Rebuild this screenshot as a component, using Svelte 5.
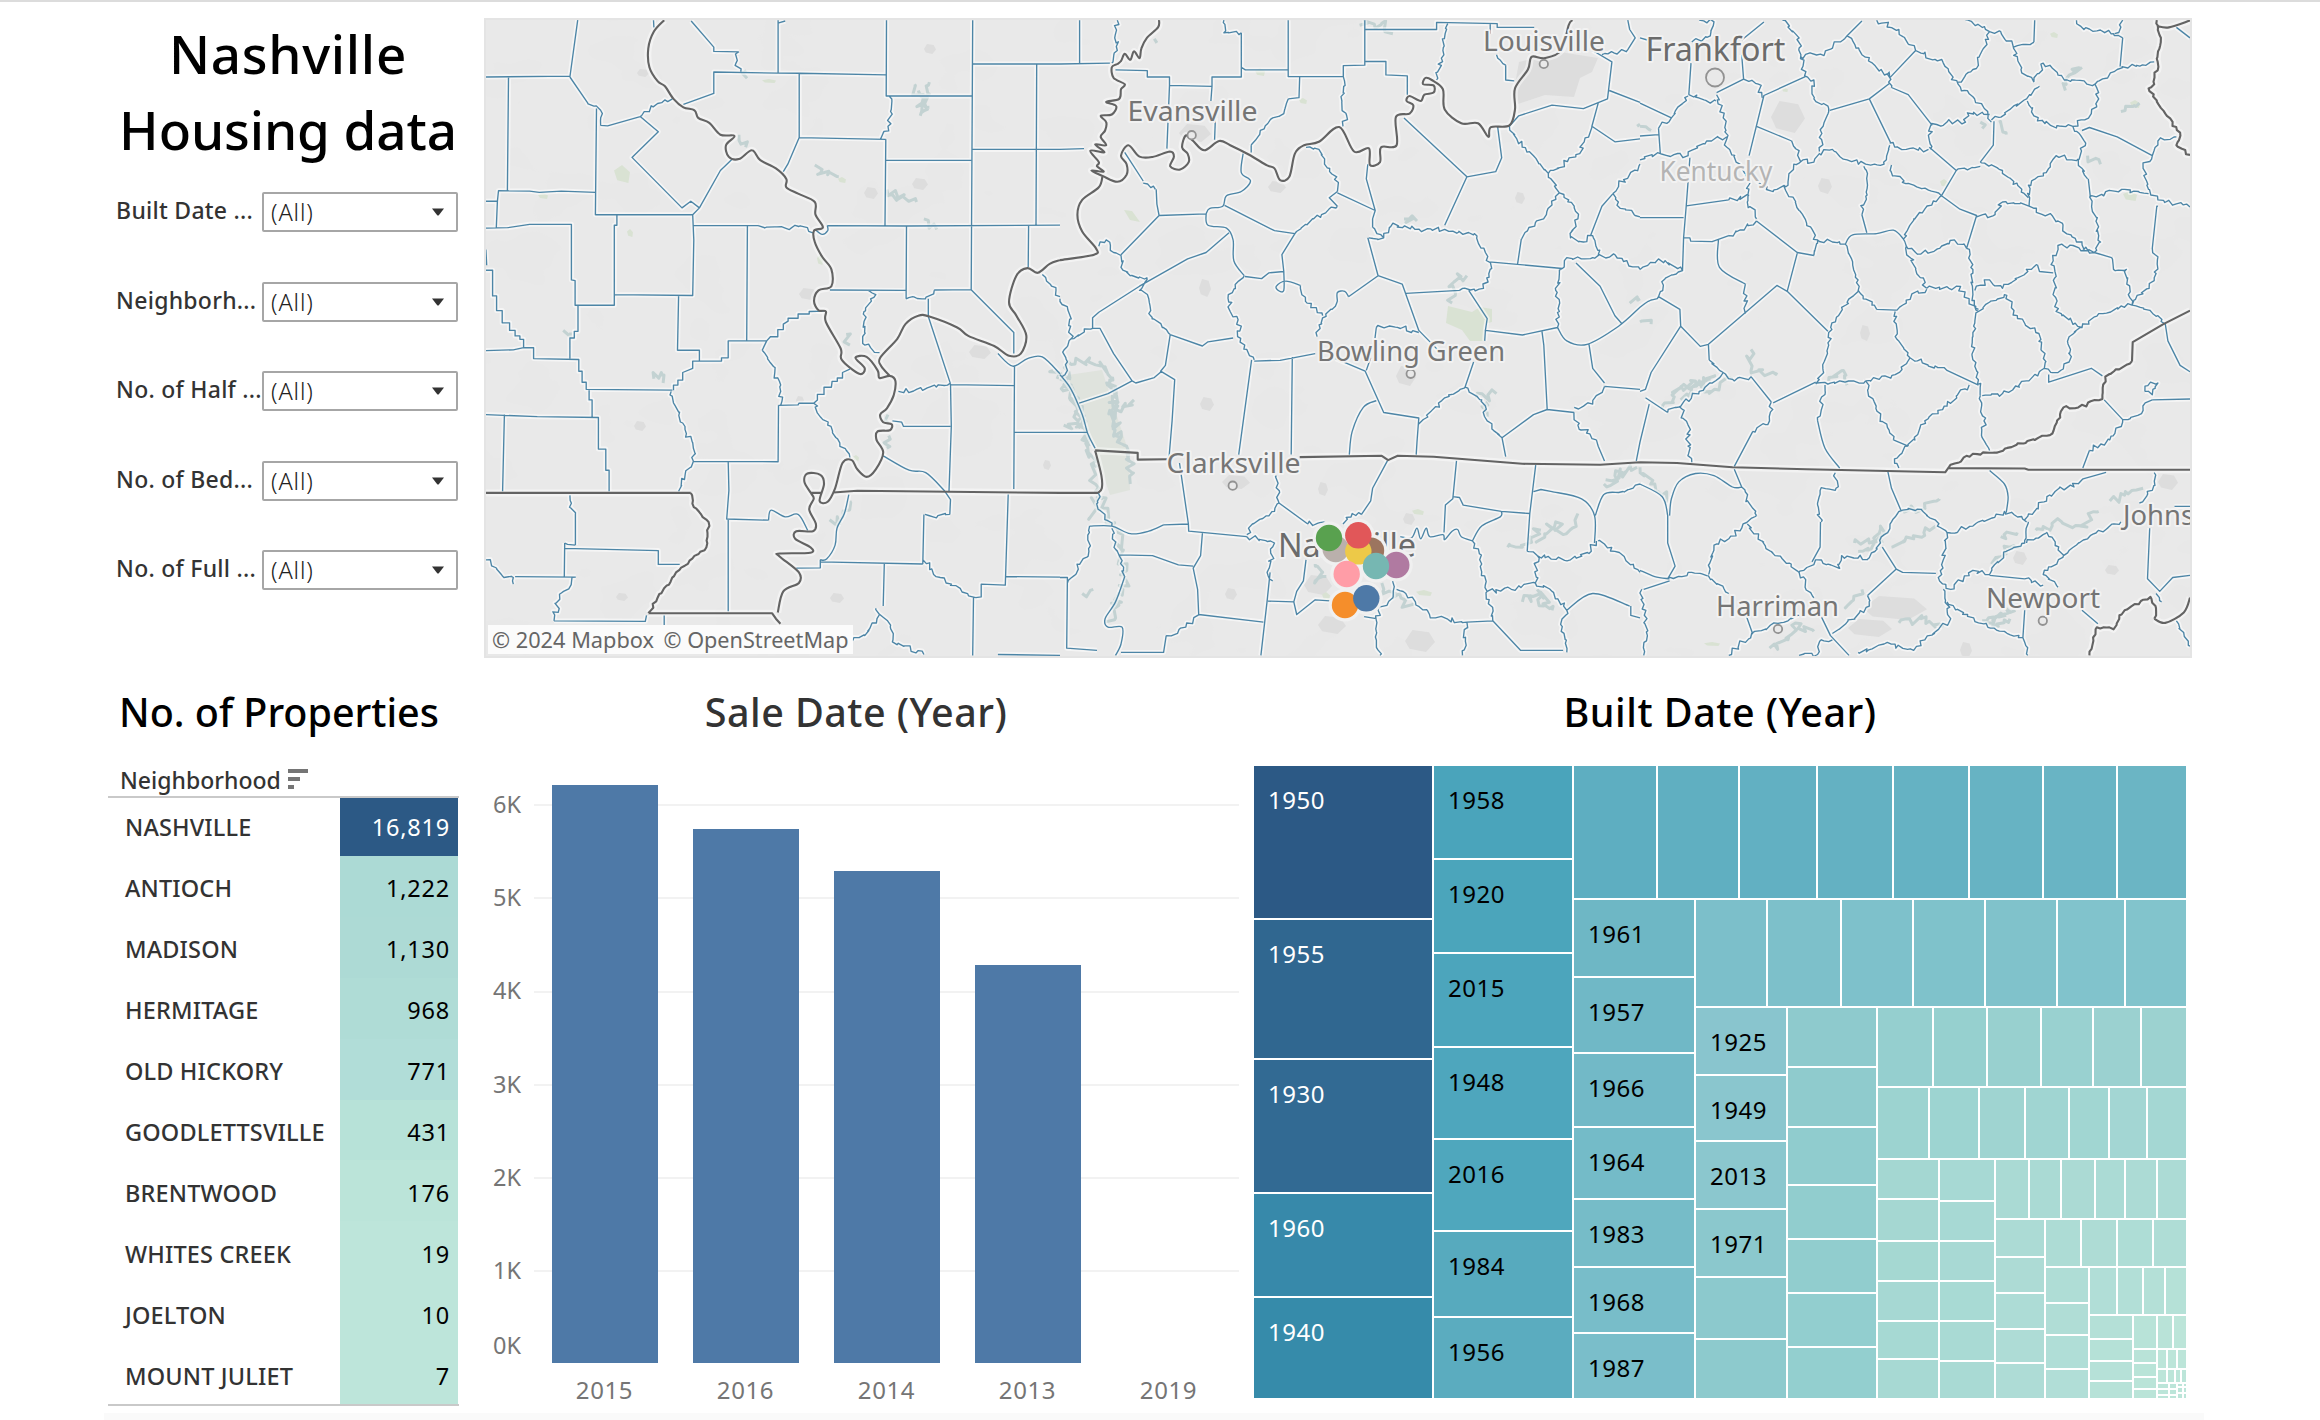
<script>
  const filters = ['Built Date ...', 'Neighborh...', 'No. of Half ...', 'No. of Bed...', 'No. of Full ...'];

  const rows = [
    { name: 'NASHVILLE', value: '16,819', fill: '#2c5985', light: true },
    { name: 'ANTIOCH', value: '1,222', fill: '#acdad5' },
    { name: 'MADISON', value: '1,130', fill: '#addad5' },
    { name: 'HERMITAGE', value: '968', fill: '#afdcd6' },
    { name: 'OLD HICKORY', value: '771', fill: '#b1ddd8' },
    { name: 'GOODLETTSVILLE', value: '431', fill: '#b7e2d8' },
    { name: 'BRENTWOOD', value: '176', fill: '#bbe4d9' },
    { name: 'WHITES CREEK', value: '19', fill: '#bde5da' },
    { name: 'JOELTON', value: '10', fill: '#bde5da' },
    { name: 'MOUNT JULIET', value: '7', fill: '#bde5da' }
  ];

  const ticks = ['6K', '5K', '4K', '3K', '2K', '1K', '0K'];
  const bars = [
    { year: '2015', height: 578 },
    { year: '2016', height: 534 },
    { year: '2014', height: 492 },
    { year: '2013', height: 398 },
    { year: '2019', height: 0 }
  ];

  // ---- treemap -----------------------------------------------------------
  function mix(a, b, t) {
    const pa = [1, 3, 5].map((i) => parseInt(a.slice(i, i + 2), 16));
    const pb = [1, 3, 5].map((i) => parseInt(b.slice(i, i + 2), 16));
    return `rgb(${pa.map((v, i) => Math.round(v + (pb[i] - v) * t)).join(',')})`;
  }
  // A strip of leaves, laid along one direction
  function strip(dir, size, sizes, from, to, labels = [], light = false) {
    return {
      dir,
      size,
      items: sizes.map((s, i) => ({
        size: s,
        fill: mix(from, to, sizes.length > 1 ? i / (sizes.length - 1) : 0),
        label: labels[i],
        light
      }))
    };
  }
  const group = (dir, size, items) => ({ dir, size, items });
  const leaf = (size, fill, label, light) => ({ size, fill, label, light });
  const pale = '#bce5d9';

  const tree = group('row', 932, [
    group('column', 178, [
      leaf(152, '#2c5985', '1950', true),
      leaf(138, '#306790', '1955', true),
      leaf(132, '#326a93', '1930', true),
      leaf(102, '#3789aa', '1960', true),
      leaf(100, '#368baa', '1940', true)
    ]),
    group('column', 138, [
      leaf(92, '#4aa4bb', '1958'),
      leaf(92, '#4ba5bb', '1920'),
      leaf(92, '#4ca5bc', '2015'),
      leaf(90, '#4ea6bd', '1948'),
      leaf(90, '#4fa7bd', '2016'),
      leaf(84, '#57aabe', '1984'),
      leaf(80, '#5bacbf', '1956')
    ]),
    group('column', 612, [
      strip('row', 132, [82, 80, 76, 74, 74, 72, 72, 68], '#5eaec1', '#6bb5c4'),
      group('row', 498, [
        strip('column', 120, [76, 74, 72, 70, 66, 64, 64], '#6eb7c5', '#7abeca',
          ['1961', '1957', '1966', '1964', '1983', '1968', '1987']),
        group('column', 490, [
          strip('row', 106, [70, 72, 70, 70, 70, 66, 60], '#7cbfca', '#82c4cc'),
          group('row', 390, [
            strip('column', 90, [66, 64, 66, 66, 60, 58], '#89c5ce', '#8dcacd',
              ['1925', '1949', '2013', '1971']),
            strip('column', 88, [58, 58, 56, 52, 52, 52, 50], '#8ecacd', '#93cfcf'),
            group('column', 308, [
              strip('row', 78, [54, 52, 52, 50, 46, 44], '#95cfcf', '#9cd2d0'),
              strip('row', 70, [50, 48, 44, 42, 38, 36, 38], '#9cd3d0', '#a4d7d3'),
              group('row', 238, [
                strip('column', 60, [38, 40, 38, 38, 36, 38], '#a4d7d2', '#a7d9d3'),
                strip('column', 54, [40, 38, 38, 38, 38, 36], '#a7d9d4', '#a9dad4'),
                group('column', 190, [
                  strip('row', 58, [32, 30, 32, 28, 30, 28], '#aadad4', '#acdbd5'),
                  group('row', 178, [
                    strip('column', 48, [36, 34, 34, 32, 34], '#acdbd5', '#aedcd6'),
                    group('column', 140, [
                      strip('row', 46, [34, 34, 34, 32], '#addcd5', '#afddd6'),
                      group('row', 130, [
                        strip('column', 42, [34, 30, 32, 28], '#afddd6', '#b1ded7'),
                        group('column', 96, [
                          strip('row', 46, [26, 24, 20, 20], '#b1ded7', '#b5e1d7'),
                          group('row', 82, [
                            strip('column', 42, [22, 20, 18, 16], '#b4e0d7', '#b7e2d8'),
                            strip('column', 22, [32, 12, 12, 10, 8], '#b8e3d8', '#bae4d8'),
                            group('column', 28, [
                              strip('row', 32, [14, 12], '#b9e3d8', pale),
                              strip('row', 18, [8, 8, 8], pale, pale),
                              strip('row', 12, [8, 6, 4, 4], pale, pale),
                              group('row', 14, [
                                strip('column', 10, [4, 4, 2], pale, pale),
                                strip('column', 6, [4, 4, 2], pale, pale),
                                strip('column', 4, [2, 4, 4], pale, pale),
                                strip('column', 2, [2, 4, 4], pale, pale)
                              ])
                            ])
                          ])
                        ])
                      ])
                    ])
                  ])
                ])
              ])
            ])
          ])
        ])
      ])
    ])
  ]);

  // ---- map ---------------------------------------------------------------
  // Each map sheet lists its lines, one per row: s = straight, w = river-like, c = curved
  const KX = 1 / 2.7034;
  const KY = 1 / 2.3758;
  let seed = 11;
  const rand = () => ((seed = (seed * 16807) % 2147483647) / 2147483647) - 0.5;

  function toPath(line, ox, amp = 5) {
    const kind = line[0];
    const pts = line.slice(2).trim().split(/\s+/).map((p) => {
      const [x, y] = p.split(',').map(Number);
      return [ox + x * KX, y * KY];
    });
    const f = (p) => `${p[0].toFixed(1)} ${p[1].toFixed(1)}`;
    if (kind === 's') return 'M' + pts.map(f).join('L');
    if (kind === 'c') {
      let d = 'M' + f(pts[0]);
      for (let i = 0; i < pts.length - 1; i++) {
        const a = pts[i - 1] || pts[i], b = pts[i], c = pts[i + 1], e = pts[i + 2] || c;
        d += `C${f([b[0] + (c[0] - a[0]) / 6, b[1] + (c[1] - a[1]) / 6])} ${f([c[0] - (e[0] - b[0]) / 6, c[1] - (e[1] - b[1]) / 6])} ${f(c)}`;
      }
      return d;
    }
    const out = [pts[0]];
    for (let i = 1; i < pts.length; i++) {
      const a = pts[i - 1], b = pts[i];
      const n = Math.max(1, Math.round(Math.hypot(b[0] - a[0], b[1] - a[1]) / 3.5));
      for (let k = 1; k < n; k++) {
        out.push([a[0] + ((b[0] - a[0]) * k) / n + rand() * amp, a[1] + ((b[1] - a[1]) * k) / n + rand() * amp]);
      }
      out.push(b);
    }
    return 'M' + out.map(f).join('L');
  }
  const build = (sheet, ox, amp) => sheet.trim().split('\n').map((l) => toPath(l.trim(), ox, amp)).join('');

  const countyWest = `
s 264,48 243,183
s 16,183 243,181
s 77,183 74,453
s 243,183 290,243
w 290,243 308,252 326,262 326,298
s 315,258 312,510 575,510 593,494 650,405 682,378
s 326,298 345,299 433,277 482,313 411,374 546,494 570,478 593,494
w 433,277 480,246 520,235
s 550,248 632,222 632,171 806,174 863,174 1098,178
s 571,50 632,112 632,122 700,123
w 700,123 692,150 705,170
s 806,48 806,172
w 806,55 825,50
s 469,48 470,65
s 1099,48 1098,228 1330,228
s 1332,48 1328,688
s 863,174 863,327 1097,331
s 863,327 832,390 820,408
w 1106,228 1110,265 1103,300 1083,330
s 1097,331 1095,535
s 1098,381 1328,381
s 1332,152 1568,152
s 1505,152 1503,535
s 1329,355 1568,355
s 16,478 47,478 50,453 134,454 160,457 220,454 312,457
s 47,478 44,541
s 16,542 75,541 134,533 247,533 247,665 257,667 257,725 363,725 363,700 575,702 578,570 575,510
s 370,510 370,535 363,535 363,700
s 575,536 752,536
w 752,536 820,540 862,538 900,553
c 905,545 925,557 940,548 939,536
s 939,536 1153,537 1568,535
s 723,536 721,810
s 1153,537 1152,710
s 946,689 1152,690
s 1228,689 1327,688 1443,790 1443,840
w 1152,710 1170,705 1195,710 1228,690
s 1212,710 1212,752 1272,912
s 1483,535 1482,635
s 16,593 18,630
s 16,642 34,642 34,703 45,703 45,738 60,738 60,767 80,767 80,785 95,785 95,798 108,798 108,806 118,806 118,826
s 16,833 90,831 118,826 145,826 145,852 267,854 267,882 276,882 276,908 287,908 287,925 520,927
s 265,725 265,787 255,787 255,803 243,803 243,852
s 537,702 534,832 593,832 593,858
s 523,927 523,915 535,915 535,903 548,903 548,885 575,875 575,858 653,858 653,850 671,850 671,810 775,810
s 775,810 785,800 805,800 805,783 820,783 820,770 833,763 833,756 860,756 860,746 890,746 890,740 930,739
s 775,810 763,832
w 763,832 797,885 813,930 813,963
s 807,963 860,962 862,958 902,958 912,950 912,937 930,937 930,920 950,920 952,906 966,906 966,898 980,898 980,885 1000,877
w 902,958 940,1010 1000,1087
s 807,963 806,1097 577,1096
w 517,930 525,960 548,1005 577,1065 577,1096 555,1125 537,1167
s 671,1097 673,1165 667,1233 780,1236
c 780,1236 787,1212 825,1228 860,1222 886,1260
s 671,1233 671,1452
s 16,985 155,990 320,992 320,1067 340,1067 340,1117 349,1117 349,1167
s 295,925 295,950 303,950 303,990
s 66,985 61,1167
w 243,1177 242,1205 258,1222
s 258,1220 258,1295
w 258,1295 229,1290
s 229,1290 228,1370
s 229,1303 482,1308 482,1341 540,1341
w 16,1330 45,1350 60,1368 90,1372 90,1388
s 95,1370 259,1371
w 259,1371 215,1412 200,1475
s 200,1475 447,1476 450,1462
s 498,1462 498,1485
w 1050,690 1070,700 1038,740 1040,820 1080,838
w 1131,930 1180,925 1272,910
s 1272,912 1274,1013 1268,1167
s 1272,914 1445,916
c 1400,840 1440,870 1480,852 1520,848 1568,888
s 1445,870 1443,1162
s 1445,1027 1568,1027
s 1115,1000 1140,1003 1145,1013 1272,1013
c 1090,1083 1160,1117 1205,1123 1255,1165
s 1255,1165 1272,1187 1270,1222
w 1270,1222 1225,1228 1203,1222
s 1200,1222 1197,1340
c 997,1175 985,1220 965,1255 960,1295 937,1328 920,1330
s 920,1330 920,1349 855,1350
s 920,1335 1197,1340
w 1197,1330 1260,1385 1340,1420
s 1340,1420 1355,1418 1355,1388 1420,1390 1428,1175
s 1422,1370 1568,1371
s 1334,1420 1332,1557
s 1093,1340 1090,1440
w 1070,1445 1080,1460 1102,1475 1115,1525 1200,1555
w 1080,1460 1040,1510 1008,1522
w 1520,652 1545,680 1568,705
s 1400,1555 1568,1557`;

  const stateWest = `
c 498,48 470,75 455,115 458,160 480,193 500,205 523,235 550,255 580,262 590,280 620,292 650,320 688,323 665,345 672,372 700,378 735,357 757,380 800,400 828,425 828,445 860,460 905,480 907,510 927,540 903,548 905,575 925,610 950,640 950,680 915,690 903,715 915,737 935,740 935,765 975,828 978,855 1025,888 1040,875 1015,850 1045,848 1075,880 1080,898 1108,893 1123,905 1118,940 1100,970 1082,985 1090,1003 1113,1008 1108,1022 1075,1025 1072,1045 1090,1075 1070,1115 1045,1133 1020,1115 1005,1093 980,1100 960,1160 940,1192 918,1190 930,1150 920,1128 885,1125 877,1145 895,1172 902,1185 890,1210 908,1245 900,1262 855,1262 852,1280 893,1300 893,1313 810,1315 810,1322 862,1360 862,1385 820,1405 805,1455
s 455,1457 790,1457 800,1470 812,1482
s 16,1171 570,1171
w 570,1171 578,1205 618,1240 612,1300 530,1360 480,1420 455,1457
s 893,1171 925,1171
s 955,1170 1020,1166 1568,1171
c 1108,893 1085,870 1082,850 1128,805 1150,770 1185,750 1215,752 1290,778 1320,798 1390,822 1430,845 1462,840 1477,797 1450,750 1430,718 1450,655 1480,637 1508,648 1540,627 1568,618`;

  const countyMid = `
s 53,48 53,152
s 0,152 135,150
w 155,48 148,90 155,120 140,150
s 150,166 236,168 236,183 296,183 296,203 411,205 411,183 490,183 490,78
w 443,48 443,78 490,78
s 296,203 289,353
s 411,205 408,240
s 420,280 418,332
s 490,160 501,166 617,166
s 617,48 617,182 766,182 766,156 824,155 824,48
s 824,146 881,146 881,178 939,180 939,225
s 824,70 1018,70 1018,53 1182,56 1182,65 1282,65
w 766,182 762,240 775,275 765,300
s 648,182 646,232 617,235
w 617,235 605,270 575,280 540,320 517,345
s 517,345 517,362
s 0,355 65,353
w 1048,56 1035,120 1018,190
s 175,362 225,430
w 225,435 258,450
s 260,450 262,485 268,512 395,508
c 395,508 405,495 440,490 450,465 490,455 515,430 490,410 495,365
s 268,512 165,605
w 105,585 125,570 145,600 165,607 165,635 190,655 235,660 215,690 240,710 240,745 298,795
c 395,508 400,535 450,542 468,570 470,620 498,655
s 445,488 580,548 635,555 600,605 605,645 565,648 545,662 500,657
c 605,645 605,690 590,690 585,680 610,668 650,678
w 650,678 668,720 710,750
s 457,553 395,600 345,615 215,680 105,742 88,755 88,780
w 498,655 455,700 460,740 490,775 480,800 525,855
s 298,795 385,822 400,812 468,803
s 298,795 285,868 272,882 310,902 303,1000 295,1085
w 0,710 25,745 30,805 88,780
s 88,780 108,780 145,840 195,905 205,910 255,897 275,882
w 30,805 12,830 20,880 5,895
s 195,905 130,935 52,958
c 0,890 30,925 60,985 75,1030 95,1065
s 0,1027 72,1027
s 518,855 483,1080
s 525,858 595,856 690,840
s 745,852 825,882 875,980 970,993 965,1050 963,1080
s 628,848 625,1080
c 855,952 820,968 790,1025 782,1080
w 635,555 685,520 750,490
s 750,490 728,470 750,455
w 750,455 748,420 715,390 700,355 665,350
s 750,458 852,500 828,425 832,390
s 852,500 845,520 845,540
w 845,540 875,565 835,565
w 875,565 900,530 960,545 1040,545 1120,555 1150,600 1163,640 1145,685 1080,690
s 1080,690 935,697
s 832,565 860,655 780,705
c 780,705 770,692 750,695 750,715
w 750,715 735,735 710,755 695,800
s 860,655 925,675 970,785 1020,830
w 970,790 950,790 935,775 855,778
s 855,778 850,815
s 840,850 828,880
s 930,280 1100,420 1040,535
s 1100,420 1178,408 1194,375 1183,300
w 1215,300 1235,330 1280,370 1320,412 1350,458 1390,490 1400,520 1380,565 1415,575 1440,560 1455,605
s 1215,300 1240,275 1330,250 1415,258 1480,235 1492,147 1440,120
s 1163,56 1163,80
w 1180,130 1205,155
s 1205,155 1205,190 1228,192
s 1485,215 1568,243
s 1455,245 1438,300 1500,337 1568,330
w 1438,300 1405,365 1320,412
s 1535,48 1540,70 1555,90 1535,118
w 1535,118 1465,130
w 1350,458 1315,510 1247,568
s 1247,568 1237,627
s 1160,622 1358,638
w 1358,638 1370,612 1440,612 1500,605 1568,640
w 1358,638 1340,690 1350,740 1345,778
c 1345,778 1370,810 1425,818 1510,775 1568,730
s 1395,625 1460,680 1500,750 1518,768
w 1568,390 1510,440 1495,460
s 1495,460 1465,490 1435,558
w 1495,460 1515,495 1568,515
s 1105,690 1155,757 1150,785 1250,796 1345,778
s 1150,785 1148,810
s 1118,860 1095,920
w 1095,920 1040,945 970,1008
w 1095,920 1140,950 1155,1000 1195,1040
s 1195,1040 1205,1085
s 1195,1040 1280,985 1317,973 1390,980
w 1390,980 1400,1010 1450,1045
s 1450,1045 1455,1060 1472,1095
s 1303,788 1308,820 1317,973
s 1430,818 1440,875 1472,910
w 1472,918 1440,960 1390,968
s 1472,918 1568,925
s 1568,1050 1558,1095
s 323,1100 347,1245 280,1247
c 280,1247 240,1262 190,1268 140,1250 80,1250
s 347,1245 348,1262 505,1275
w 505,1275 580,1290 560,1360 575,1380
s 568,1360 560,1428 543,1557
w 505,1270 520,1245 580,1215 592,1195 585,1130
s 592,1195 670,1245
w 670,1245 715,1240
s 885,1095 845,1160 840,1190 815,1222
w 815,1222 790,1220 765,1245
s 1072,1095 1062,1185 1042,1200 1038,1265
s 1062,1180 1080,1182 1090,1200 1193,1215 1270,1220
c 1193,1215 1190,1228 1140,1250 1115,1285
s 1286,1105 1270,1220 1263,1310
c 920,1275 950,1278 965,1255 975,1280 990,1255 1000,1275 1035,1270 1040,1282 1060,1262 1075,1258 1085,1275 1115,1285
w 1115,1285 1140,1340 1155,1405 1170,1475
w 1155,1405 1220,1400 1285,1385 1290,1320 1263,1310
w 1290,1320 1380,1330 1430,1315 1450,1285
s 1280,1168 1300,1163 1330,1168
c 1330,1168 1410,1185 1445,1225 1445,1290
w 1568,1150 1510,1170
c 1510,1170 1470,1175 1447,1225
w 1455,1285 1500,1310 1568,1360
w 1285,1385 1330,1405 1370,1450 1355,1500 1370,1550
c 1370,1450 1440,1410 1540,1440
s 1543,1440 1543,1462 1568,1468
w 910,1400 1015,1468 1100,1478
s 1100,1478 1170,1475 1245,1545 1360,1545
w 1100,1478 1088,1557
w 900,1380 900,1420 860,1450 855,1500 865,1557
s 822,1465 855,1470
s 665,1330 658,1380 640,1405 632,1430 562,1428
s 632,1430 640,1460 690,1425 740,1428
s 385,1267 380,1320 360,1350 372,1400 375,1460 550,1478
w 375,1460 340,1490 287,1510
s 287,1510 280,1550 165,1550
w 140,1255 160,1320 175,1370
c 175,1370 150,1430 122,1470 130,1490 168,1490 165,1530 150,1557
s 160,1318 250,1320 320,1342 360,1345
w 103,1170 103,1210 140,1250
w 80,1250 78,1310 20,1385
s 0,1372 20,1372 18,1540 100,1545`;

  const stateMid = `
c 268,48 265,65 235,90 220,115 215,138 200,122 190,142 175,128 165,145 155,152 140,160 145,185 175,200 165,212 160,235 125,242 152,252 140,272 110,275 125,290 122,310 110,325 125,345 95,343 120,362 82,358 105,385 100,395 118,408 85,405 115,418 155,432 180,415 180,390 165,370 185,345 215,372 250,373 297,360 308,372 298,395 325,403 348,385 345,365 330,350 340,322 360,335 390,357 430,335 460,345 510,367 560,393 580,400 595,428 620,420 635,365 660,345 700,337 755,302 795,360 835,352 838,392 865,385 868,350 910,345 908,278 945,270 955,250 937,240 945,228 975,240 985,225 1010,220 1010,203 982,200 988,185 1005,190 1035,212 1040,260 1085,293 1130,293 1158,325 1165,302 1215,298 1230,260 1230,210 1265,165 1275,135 1310,138 1355,120 1375,60 1385,48
c 115,418 105,445 60,475 47,510 60,550 97,590 92,605 0,618
s 95,1070 210,1076 210,1092 290,1091
c 95,1070 112,1130 113,1160 103,1171
s 103,1171 0,1171
s 648,1086 870,1083 887,1093 913,1083 1010,1085 1250,1102 1460,1104 1568,1098`;

  const countyEast = `
w 160,48 200,52 190,85 140,100
s 0,90 20,95
s 138,150 132,225
w 132,225 190,245 205,240
s 207,220 280,188 275,130
s 275,95 335,52
w 385,48 430,90 435,130 445,180 470,190 470,235 510,258 495,300 485,360
w 435,135 500,125 560,85
s 560,85 600,50
w 560,85 600,130 675,185
s 675,185 745,120
w 640,48 700,70 745,120 820,150 860,200 900,230 940,265 950,290
w 675,170 672,195 680,208
s 680,208 725,225 790,298
s 447,182 335,227 295,370
w 280,188 320,200 330,232
w 207,225 225,280 235,350 270,390 295,430 290,480 315,520
s 315,300 410,335
w 410,335 435,385
w 315,430 360,455 400,440 415,400 440,380 470,385 485,365
w 485,365 520,355 560,380 610,390 660,390 675,345
s 513,262 620,235 678,340
w 675,340 720,355 780,355
s 675,198 620,235
w 785,300 785,355
w 785,300 830,290 880,290 885,268 945,272
s 782,350 855,405 815,465
w 855,405 920,395
s 920,385 955,345 957,288
w 950,285 1000,260 1045,235 1080,205
w 860,195 900,165 925,120 945,75
w 880,48 945,75 975,75 1010,115 1030,165 1065,195
w 1010,112 1065,100
s 1065,100 1067,48
w 1065,195 1090,150 1155,190 1230,200 1290,165 1390,147
w 1180,48 1200,70 1280,80 1305,90
s 1305,90 1298,158
w 1305,48 1283,80
w 1047,240 1065,275 1110,298 1170,300 1220,270 1240,235 1230,200
w 1170,300 1205,340 1185,380
s 1195,310 1215,303 1290,325 1385,370
w 1385,370 1400,335 1450,325
w 1385,370 1360,400 1375,450 1400,475 1487,492
w 1185,380 1210,425
s 1212,425 1217,465
w 1217,465 1240,560 1245,575 1228,600
w 1217,467 1310,450 1375,460
w 1185,378 1125,370 1105,400 1050,440 1052,490
w 920,385 980,405 1050,470
w 1052,490 980,480 960,510 910,515
s 815,465 865,497 910,512 883,590
w 1052,490 1130,525 1180,575 1228,600
s 1228,600 1275,612
w 1275,612 1280,640 1315,640 1320,700 1330,725
s 1400,490 1397,490 1385,590
w 1385,590 1400,610 1390,660 1330,725
w 1228,600 1140,580 1117,620
w 1117,620 1125,740 1195,778 1240,745 1330,725 1400,750 1420,770
s 1420,770 1427,810 1460,868 1487,883
w 1195,778 1160,800 1160,860 1130,885 1093,875 1095,840 1070,790 1020,750 985,700 915,740
w 905,690 945,665 980,685 1075,630
s 1075,630 1080,645 1117,648
w 883,590 900,640 900,700 915,740
w 915,740 900,790 905,870 920,940
w 775,685 835,685 855,680 915,735
w 720,585 745,640 775,685
w 720,585 745,600 795,597 850,570 883,590
w 712,568 740,520 815,465
w 815,465 740,440 683,418 680,392
c 555,580 575,558 640,555 685,547 712,568 720,585
w 555,580 575,630 590,690
w 590,690 640,735
s 640,735 692,737
w 692,737 720,720 735,698 775,687
w 605,395 615,440 600,510
s 600,510 613,553
w 480,570 520,575 555,580
w 390,440 430,500 480,570 470,607
s 470,607 425,600 315,525
s 425,602 398,692 508,787
s 398,692 370,678 185,818
w 590,690 545,730 510,790 510,820 495,880 475,912
s 475,908 360,957
w 315,525 240,560
s 240,560 195,574 137,573 135,565 118,565
s 135,375 125,490 118,565 115,643
s 0,517 118,517
s 125,489 240,475
w 240,475 295,465
c 212,570 215,635 285,675
w 285,675 285,745
w 0,640 50,615 115,643 70,660 50,705 0,730
s 50,705 108,735 110,775 163,823 185,818 187,855
w 187,855 215,880 255,905 300,895
s 300,895 355,955
s 110,775 30,885 15,925 0,930
w 75,980 160,930 225,885
s 15,945 75,980
w 355,955 350,1000 305,1025
s 305,1025 255,1108
w 105,965 130,1010 130,1060 140,1098
s 25,960 0,1050
w 475,912 540,905 610,905
w 610,905 640,975 685,1045
s 685,1045 725,1060
w 725,1060 770,1000 830,965 890,915
w 610,905 690,890 730,850
w 730,850 830,880
s 830,880 915,915
w 730,850 690,800 690,740
w 500,915 480,1000
c 480,1000 500,1065 540,1112
w 725,1060 688,1090 700,1112
w 925,940 980,935
w 980,935 1045,905 1093,875
w 920,940 930,1000 925,1040 945,1070
s 1105,890 1105,908 1220,875 1250,893
s 1255,950 1305,997
w 1305,997 1270,1045 1215,1070
s 1215,1070 1197,1112
w 1305,997 1360,975 1385,950
s 1385,950 1487,948
w 1365,930 1380,908 1400,910 1385,938 1365,930
s 0,245 85,280
w 130,228 85,280 50,305
s 50,305 55,365
w 55,365 130,370 180,335 235,325
w 0,380 55,365
s 0,323 50,320
s 255,1115 275,1157
w 275,1157 315,1225
c 275,1157 250,1157 200,1130 150,1125 105,1145 85,1185 80,1225
c 0,1150 60,1180 75,1225
s 75,1225 75,1290 95,1345 75,1375
w 315,1225 240,1280 200,1295 185,1365
w 75,1375 130,1360 185,1368 240,1410
w 290,1245 365,1320 430,1360
w 430,1360 480,1330 540,1350 545,1320 620,1325 650,1290 680,1240 710,1212
s 670,1120 680,1160 705,1212
w 528,1123 530,1160 487,1165 480,1200 490,1240
s 488,1240 487,1300 465,1335
w 710,1212 760,1210 830,1265 900,1250 985,1215 1045,1240
c 945,1118 985,1150 995,1180 990,1218
w 830,1265 820,1330 810,1380 840,1400
s 655,1300 693,1352 710,1360 800,1362
s 693,1352 615,1415
w 615,1415 620,1440 520,1505
w 430,1360 470,1420
s 490,1465 515,1510 565,1557
w 840,1400 900,1355 945,1365 990,1310 1040,1290 1050,1240
w 1040,1235 1100,1180 1200,1137
s 1200,1137 1260,1122
s 945,1367 1040,1375
w 1040,1375 1090,1390
w 1045,1290 1100,1265 1145,1320 1090,1365 1130,1395
s 1195,1450 1238,1482
w 1145,1320 1210,1280 1300,1240
w 1390,1123 1385,1165 1350,1195
s 1378,1255 1372,1375 1405,1405 1440,1372 1487,1367
s 1445,1203 1487,1203
w 830,1430 915,1480 985,1500 1035,1515 1048,1557
s 1035,1515 1040,1450
w 240,1557 310,1500 400,1475 430,1462
s 288,1465 305,1507
w 820,1400 840,1470 770,1520 740,1545 660,1530 590,1550
c 0,1355 40,1370 80,1375
s 80,1380 10,1400
w 5,1400 20,1510 10,1557
w 1395,1410 1410,1430
w 1450,1475 1487,1535
w 430,1557 480,1555 490,1520 520,1520
s 1450,65 1487,90`;

  const stateEast = `
s 0,1098 100,1100 250,1110 450,1115 825,1122 835,1110
w 835,1110 900,1078 960,1075
w 960,1075 1115,1030 1145,968 1185,968 1250,948 1258,895 1330,858
s 1330,858 1332,813 1415,770 1487,738
s 835,1112 1040,1113 1050,1116 1487,1116
w 1397,48 1408,100 1390,200 1375,210 1420,270 1460,315 1450,345 1487,368
c 1397,62 1430,65 1487,49
w 1215,1557 1235,1490 1280,1495 1310,1450 1380,1418 1395,1445 1390,1470
c 1390,1470 1420,1480 1470,1455 1487,1420`;

  const waterWest = `
w 1175,200 1195,245 1190,275
w 1185,215 1200,250 1190,270
w 1215,195 1200,240 1215,255
w 905,392 940,415 970,420
w 1100,450 1130,470 1180,480
w 1100,462 1140,468
w 700,320 718,350
w 990,795 1000,820
w 470,900 490,885 495,910
w 225,785 245,790
w 1103,985 1103,1005
w 1105,1035 1100,1065
w 945,1235 970,1240 1000,1190
w 1200,520 1235,545
w 1550,880 1560,900
w 720,168 722,186`;
  const waterMid = `
w 0,885 40,950 75,1050 105,1180 140,1250
w 0,900 45,965 80,1060
w 30,900 15,870 80,850 130,890 145,970 155,1050 180,1060 190,1150
w 135,900 150,975 158,1050
w 145,970 200,950
w 50,1000 10,1010
w 105,1180 80,1230
w 145,1250 175,1340 170,1400 125,1480
w 255,92 262,102
w 810,60 870,55 900,80
w 930,520 965,525
w 1060,720 1065,670 1100,655
w 1540,720 1568,710
w 1560,300 1568,295
w 1125,945 1180,935
w 1150,955 1155,990
w 1470,1150 1500,1130 1560,1110
w 1475,1140 1530,1120
w 1210,1300 1250,1300 1300,1260
w 1290,1290 1340,1240 1360,1270 1400,1220
w 870,1385 900,1420 950,1435
w 1250,1430 1300,1410 1330,1450
w 1290,1400 1310,1440
w 690,1340 710,1360 690,1380 720,1370
w 60,1410 90,1400`;
  const waterEast = `
w 60,970 110,920 160,905 190,930 250,900
w 110,950 140,920 200,890
w 90,940 150,905 190,900
w 300,830 300,880 370,885
w 510,905 550,880 560,915
w 0,1110 40,1150 75,1190
w 580,1290 620,1290 650,1250 655,1290
w 590,1310 640,1290
w 680,1300 740,1280 800,1250
w 700,1215 770,1205 810,1185
w 950,1340 1000,1300 1030,1300
w 975,1275 1020,1265
w 1070,1260 1140,1240 1190,1250 1240,1215
w 925,1475 980,1460 1015,1450
w 935,1480 990,1462
w 950,1485 1000,1470
w 350,1540 400,1520 420,1480 470,1500
w 1150,215 1150,190 1195,160
w 920,290 925,305
w 970,290 990,320
w 1300,265 1350,245
w 1210,370 1245,390
w 1270,1190 1330,1165 1360,1160
w 0,765 30,770
w 560,1440 600,1400
w 700,1480 760,1470 820,1490
w 0,300 30,310`;

  const counties = build(countyWest, 480) + build(countyMid, 1060) + build(countyEast, 1640);
  const states = build(stateWest, 480, 2.5) + build(stateMid, 1060, 2.5) + build(stateEast, 1640, 3);
  const water = build(waterWest, 480, 10) + build(waterMid, 1060, 11) + build(waterEast, 1640, 9);

  // Town areas and parks: centre and radii in map pixels
  const towns = [
    [643, 73, 6, 4], [930, 49, 6, 5], [871, 193, 7, 6], [920, 184, 8, 6], [808, 294, 9, 6], [640, 426, 6, 5],
    [980, 352, 11, 7], [800, 400, 4, 4], [622, 597, 6, 4], [837, 598, 7, 5], [1047, 465, 4, 5], [1195, 133, 16, 9],
    [1277, 187, 9, 6], [1205, 288, 6, 9], [1207, 404, 7, 7], [1520, 198, 5, 6], [1406, 376, 10, 10], [1323, 489, 5, 7],
    [1236, 482, 14, 7], [1231, 594, 6, 6], [1332, 625, 14, 9], [1318, 585, 14, 10], [1420, 641, 15, 11], [1409, 519, 6, 6],
    [1788, 117, 17, 16], [1825, 186, 7, 8], [1865, 333, 5, 8], [2168, 482, 10, 8], [2020, 558, 7, 7], [2112, 570, 7, 5],
    [1895, 608, 32, 12], [1870, 628, 22, 9], [1966, 650, 6, 8]
  ];
  const parks = [
    [622, 174, 8, 9], [630, 233, 3, 4], [1260, 72, 5, 4], [1303, 101, 4, 3], [1418, 512, 6, 3], [2130, 196, 7, 5],
    [543, 196, 5, 3], [842, 180, 4, 3], [820, 260, 3, 5], [769, 81, 7, 2], [1785, 90, 3, 2], [2054, 35, 4, 3],
    [1944, 183, 4, 4], [1424, 593, 8, 3], [2135, 104, 5, 4], [1712, 644, 8, 2], [856, 458, 3, 3], [1326, 596, 4, 4]
  ];

  const cities = [
    { name: 'Evansville', x: 1127.5, y: 121, w: 130, size: 27, dot: [1191.7, 135.2] },
    { name: 'Louisville', x: 1483, y: 51.4, w: 122, size: 27, dot: [1543.8, 64] },
    { name: 'Bowling Green', x: 1317, y: 360.5, w: 188, size: 27, dot: [1410.7, 373.8] },
    { name: 'Clarksville', x: 1166.5, y: 472.5, w: 134, size: 27, dot: [1232.7, 485.7] },
    { name: 'Harriman', x: 1716, y: 615.5, w: 123, size: 27, dot: [1778, 629] },
    { name: 'Newport', x: 1986, y: 607.5, w: 114, size: 27, dot: [2042.8, 620.8] },
    { name: 'Johns', x: 2123, y: 524.5, w: 71, size: 27 },
    { name: 'Kentucky', x: 1659.5, y: 180.5, w: 113, size: 27, faint: true },
    { name: 'Frankfort', x: 1645.5, y: 60.8, w: 140, size: 32, dot: [1715, 77.5], r: 9, strong: true },
    { name: 'Nashville', x: 1278, y: 557, w: 138, size: 32, strong: true }
  ];

  const marks = [
    [1335.7, 549, '#bab0ac'], [1371, 550.7, '#9c755f'], [1358.3, 551.3, '#edc948'], [1396.3, 565, '#b07aa1'],
    [1376, 566, '#76b7b2'], [1346.7, 574, '#ff9da7'], [1329, 538, '#59a14f'], [1358.3, 535.3, '#e15759'],
    [1345, 605, '#f58e2b'], [1366.3, 598.3, '#4e79a7']
  ];
</script>

{#snippet node(n)}
  {#if n.items}
    <div class="group" class:stack={n.dir === 'column'} style="flex-basis:{n.size}px">
      {#each n.items as child}{@render node(child)}{/each}
    </div>
  {:else}
    <div class="cell" class:light={n.light} style="flex-basis:{n.size}px;background:{n.fill}">{n.label ?? ''}</div>
  {/if}
{/snippet}

<div class="page">
  <div class="top">
    <aside>
      <h1>Nashville<br /><span class="second">Housing data</span></h1>
      <div class="filters">
        {#each filters as label}
          <div class="filter">
            <span class="flabel">{label}</span>
            <div class="select">
              <span>(All)</span>
              <svg width="12" height="8" viewBox="0 0 12 8"><path d="M0 0.5H12L7 7Q6 8 5 7Z" fill="#333" /></svg>
            </div>
          </div>
        {/each}
      </div>
    </aside>

    <div class="map">
      <svg viewBox="484 18 1708 640" width="1708" height="640">
        <defs>
          <filter id="relief" x="0" y="0" width="100%" height="100%">
            <feTurbulence type="fractalNoise" baseFrequency="0.012 0.018" numOctaves="3" seed="4" />
            <feColorMatrix values="0 0 0 0 0.8  0 0 0 0 0.8  0 0 0 0 0.8  0.9 0 0 0 -0.3" />
          </filter>
        </defs>
        <rect x="484" y="18" width="1708" height="640" fill="#e9e9e9" />
        <rect x="484" y="18" width="1708" height="640" filter="url(#relief)" />
        <path class="urban" d="M1519 62L1560 52L1598 58L1592 72L1580 78L1574 97L1545 95L1518 104L1514 90Z" />
        {#each towns as [x, y, rx, ry]}
          <path class="urban" d="M{x - rx} {y}L{x - rx * 0.5} {y - ry}L{x + rx * 0.6} {y - ry * 0.8}L{x + rx} {y + ry * 0.1}L{x + rx * 0.4} {y + ry}L{x - rx * 0.7} {y + ry * 0.7}Z" />
        {/each}
        {#each parks as [x, y, rx, ry]}
          <path class="park" d="M{x - rx} {y - ry * 0.4}L{x} {y - ry}L{x + rx} {y - ry * 0.2}L{x + rx * 0.8} {y + ry}L{x - rx * 0.6} {y + ry * 0.7}Z" />
        {/each}
        <path class="park" d="M1448 306L1472 312L1480 307L1492 309L1492 322L1484 324V341L1470 341L1462 330L1446 323Z" />
        <path class="park" d="M1124 210L1132 211L1140 222L1130 220Z" />
        <path class="wetland" d="M1068 375L1102 370L1115 410L1128 450L1130 490L1110 495L1095 450L1075 400Z" />
        <path class="water" d={water} />
        <path class="casing" d={counties} />
        <path class="casing wide" d={states} />
        <path class="county" d={counties} />
        <path class="state" d={states} />
        {#each cities as c}
          {#if c.dot}<circle class="town" cx={c.dot[0]} cy={c.dot[1]} r={c.r ?? 4.2} />{/if}
          <text class:faint={c.faint} class:strong={c.strong} x={c.x} y={c.y} font-size={c.size} textLength={c.w} lengthAdjust="spacingAndGlyphs">{c.name}</text>
        {/each}
        {#each marks as [x, y]}<circle cx={x} cy={y} r="16.5" fill="#f0f0f0" />{/each}
        {#each marks as [x, y, fill]}<circle cx={x} cy={y} r="13.2" {fill} />{/each}
        <rect class="edge" x="485" y="19" width="1706" height="638" />
        <rect x="488" y="625" width="365" height="29" fill="#fff" fill-opacity="0.8" />
        <text class="credit" x="492" y="647.5" textLength="162" lengthAdjust="spacingAndGlyphs">© 2024 Mapbox</text>
        <text class="credit" x="663.5" y="647.5" textLength="185" lengthAdjust="spacingAndGlyphs">© OpenStreetMap</text>
      </svg>
    </div>
  </div>

  <div class="bottom">
    <section class="props">
      <h2>No. of Properties</h2>
      <div class="thead">
        <span>Neighborhood</span>
        <svg width="20" height="20" viewBox="0 0 20 20" fill="#757575"><path d="M0 0H20V4H0ZM0 8H12V12H0ZM0 16H6V20H0Z" /></svg>
      </div>
      <div class="tbody">
        {#each rows as r}
          <div class="trow">
            <span class="name">{r.name}</span>
            <span class="val" class:light={r.light} style="background:{r.fill}">{r.value}</span>
          </div>
        {/each}
      </div>
    </section>

    <section class="sales">
      <h2>Sale Date (Year)</h2>
      <div class="chart">
        <div class="yaxis">{#each ticks as t}<span>{t}</span>{/each}</div>
        <div class="plot">
          {#each bars as b}
            <div class="slot"><div class="bar" style="height:{b.height}px"></div></div>
          {/each}
        </div>
      </div>
      <div class="xaxis">{#each bars as b}<span>{b.year}</span>{/each}</div>
    </section>

    <section class="built">
      <h2>Built Date (Year)</h2>
      <div class="treemap">{@render node(tree)}</div>
    </section>
  </div>
  <div class="foot"></div>
</div>

<style>
  :global(body) {
    margin: 0;
    background: #fff;
  }
  .page {
    box-sizing: border-box;
    width: 2320px;
    height: 1420px;
    overflow: hidden;
    border-top: 2px solid #dcdcdc;
    font-family: 'Noto Sans', 'Open Sans', sans-serif;
    color: #000;
    display: flex;
    flex-direction: column;
  }
  .top {
    display: flex;
    height: 660px;
    flex: none;
  }
  aside {
    width: 484px;
    flex: none;
  }
  h1 {
    margin: 14px 0 0 92px;
    width: 392px;
    height: 152px;
    text-align: center;
    font-weight: 500;
    font-size: 53px;
    line-height: 76px;
    letter-spacing: 0.7px;
    white-space: nowrap;
  }
  .second {
    letter-spacing: -0.1px;
  }
  .filters {
    display: flex;
    flex-direction: column;
    gap: 49.5px;
    margin: 24px 0 0 116px;
  }
  .filter {
    display: flex;
    width: 342px;
    height: 40px;
  }
  .flabel {
    width: 146px;
    flex: none;
    font-size: 23px;
    font-weight: 500;
    line-height: 37px;
    letter-spacing: 0.25px;
    color: #333;
    white-space: nowrap;
  }
  .flabel:first-letter {
    letter-spacing: 0.4px;
  }
  .select {
    box-sizing: border-box;
    flex: 1;
    border: 2px solid #a6a6a6;
    border-radius: 2px;
    display: flex;
    align-items: center;
    justify-content: space-between;
    padding: 0 12px 0 7px;
    font-size: 23.5px;
    font-weight: 300;
    letter-spacing: 0.9px;
    color: #222;
  }
  .map {
    margin-top: 16px;
    height: 640px;
  }
  .map svg {
    display: block;
  }
  .urban {
    fill: #dddddd;
  }
  .park {
    fill: #d9e2d3;
  }
  .wetland {
    fill: #dfe3dd;
  }
  .water {
    fill: none;
    stroke: #c3d2d2;
    stroke-width: 3;
    stroke-linejoin: round;
  }
  .casing {
    fill: none;
    stroke: #fff;
    stroke-opacity: 0.55;
    stroke-width: 5;
    stroke-linejoin: round;
  }
  .casing.wide {
    stroke-width: 7;
    stroke-opacity: 0.45;
  }
  .county {
    fill: none;
    stroke: #4c85a6;
    stroke-width: 1.35;
    stroke-linejoin: round;
  }
  .state {
    fill: none;
    stroke: #636363;
    stroke-width: 2.1;
    stroke-linejoin: round;
  }
  .edge {
    fill: none;
    stroke: #e4e4e4;
    stroke-width: 2;
  }
  .town {
    fill: #e9e9e9;
    stroke: #929292;
    stroke-width: 1.8;
  }
  .map text {
    fill: #757575;
    stroke: #f2f2f2;
    stroke-width: 4;
    stroke-linejoin: round;
    paint-order: stroke;
  }
  .map text.strong {
    fill: #6b6b6b;
  }
  .map text.faint {
    fill: #b4b4b4;
  }
  .map text.credit {
    font-size: 22px;
    fill: #666;
    stroke: none;
  }
  .bottom {
    display: flex;
    height: 751px;
    flex: none;
  }
  h2 {
    margin: 0;
    padding-top: 21px;
    height: 83px;
    font-size: 39.5px;
    font-weight: 500;
    line-height: 58px;
    text-align: center;
    white-space: nowrap;
  }
  .props {
    width: 351px;
    margin-left: 108px;
  }
  .props h2 {
    width: 342px;
  }
  .thead {
    box-sizing: border-box;
    height: 32px;
    padding: 0 0 2px 12px;
    display: flex;
    align-items: center;
    gap: 7px;
    border-bottom: 2px solid #c9c9c9;
    font-size: 23px;
    font-weight: 500;
    color: #333;
  }
  .thead svg {
    margin-top: -3px;
  }
  .tbody {
    display: flex;
    flex-direction: column;
    height: 606px;
    border-bottom: 2px solid #c9c9c9;
    font-size: 23.5px;
  }
  .trow {
    flex: 61 1 0;
    display: flex;
    align-items: stretch;
    padding-right: 1px;
  }
  .trow:first-child {
    flex-grow: 58;
  }
  .name {
    width: 232px;
    box-sizing: border-box;
    padding-left: 17px;
    display: flex;
    align-items: center;
    font-weight: 500;
    letter-spacing: 0.15px;
    color: #333;
    white-space: nowrap;
  }
  .val {
    flex: 1;
    display: flex;
    align-items: center;
    justify-content: flex-end;
    padding-right: 8px;
    letter-spacing: 0.8px;
  }
  .trow:not(:first-child) > span {
    padding-top: 4px;
  }
  .light {
    color: #fff;
  }
  .sales {
    width: 795px;
    color: #333;
  }
  .sales h2 {
    width: 794px;
    letter-spacing: 0.45px;
  }
  .chart {
    display: flex;
    height: 597px;
    color: #757575;
    font-size: 23.5px;
  }
  .yaxis {
    width: 62px;
    margin-right: 13px;
    padding-top: 22px;
    display: flex;
    flex-direction: column;
    align-items: flex-end;
    box-sizing: border-box;
  }
  .yaxis span {
    flex: none;
    height: 93.2px;
    line-height: 32px;
  }
  .yaxis span:nth-child(6) {
    height: 75px;
  }
  .yaxis span:last-child {
    height: 32px;
  }
  .plot {
    width: 705px;
    display: flex;
    align-items: flex-end;
    background: repeating-linear-gradient(#0000 0 91.2px, #f2f2f2 91.2px 93.2px) 0 -53px / 100% 648px no-repeat;
  }
  .slot {
    width: 140.9px;
    padding-left: 1px;
    box-sizing: border-box;
    display: flex;
    justify-content: center;
  }
  .bar {
    width: 106px;
    background: #4e79a7;
  }
  .xaxis {
    display: flex;
    margin: 10px 0 0 75px;
    width: 705px;
    font-size: 24px;
    line-height: 34px;
    color: #757575;
  }
  .xaxis span {
    flex: 1;
    text-align: center;
    letter-spacing: 0.6px;
  }
  .built {
    width: 932px;
  }
  .built h2 {
    letter-spacing: 0.5px;
  }
  .treemap {
    height: 632px;
    display: flex;
  }
  .group {
    display: flex;
    gap: 2px;
    flex-shrink: 0;
    flex-grow: 0;
  }
  .stack {
    flex-direction: column;
  }
  .cell {
    flex-shrink: 0;
    flex-grow: 0;
    box-sizing: border-box;
    overflow: hidden;
    text-indent: 14px;
    font-size: 24px;
    line-height: 67px;
    letter-spacing: 0.5px;
  }
  .foot {
    flex: 1;
    margin-left: 104px;
    width: 2100px;
    background: #fafafa;
  }
</style>
